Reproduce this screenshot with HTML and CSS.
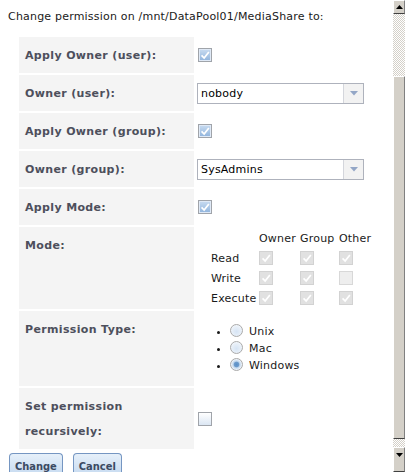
FILE: index.html
```html
<!DOCTYPE html>
<html>
<head>
<meta charset="utf-8">
<link rel="stylesheet" href="styles.css">
</head>
<body>
<div class="page">
  <div class="content">
    <p class="title">Change permission on /mnt/DataPool01/MediaShare to:</p>
    <table class="form">
      <tr>
        <th>Apply Owner (user):</th>
        <td><span class="cb on"><svg viewBox="0 0 14 14"><path d="M3 7.5 L6 10.5 L11.5 3.5"/></svg></span></td>
      </tr>
      <tr>
        <th>Owner (user):</th>
        <td><div class="select"><span class="sel-text">nobody</span><span class="sel-btn"><svg viewBox="0 0 8 5"><path d="M0 0 H8 L4 4.5 Z"/></svg></span></div></td>
      </tr>
      <tr>
        <th>Apply Owner (group):</th>
        <td><span class="cb on"><svg viewBox="0 0 14 14"><path d="M3 7.5 L6 10.5 L11.5 3.5"/></svg></span></td>
      </tr>
      <tr>
        <th>Owner (group):</th>
        <td><div class="select"><span class="sel-text">SysAdmins</span><span class="sel-btn"><svg viewBox="0 0 8 5"><path d="M0 0 H8 L4 4.5 Z"/></svg></span></div></td>
      </tr>
      <tr>
        <th>Apply Mode:</th>
        <td><span class="cb on"><svg viewBox="0 0 14 14"><path d="M3 7.5 L6 10.5 L11.5 3.5"/></svg></span></td>
      </tr>
      <tr>
        <th>Mode:</th>
        <td>
          <div class="mode">
            <span></span><span>Owner</span><span>Group</span><span>Other</span>
            <span>Read</span>
            <span><span class="cb dis"><svg viewBox="0 0 14 14"><path d="M3 7.5 L6 10.5 L11.5 3.5"/></svg></span></span>
            <span><span class="cb dis"><svg viewBox="0 0 14 14"><path d="M3 7.5 L6 10.5 L11.5 3.5"/></svg></span></span>
            <span><span class="cb dis"><svg viewBox="0 0 14 14"><path d="M3 7.5 L6 10.5 L11.5 3.5"/></svg></span></span>
            <span>Write</span>
            <span><span class="cb dis"><svg viewBox="0 0 14 14"><path d="M3 7.5 L6 10.5 L11.5 3.5"/></svg></span></span>
            <span><span class="cb dis"><svg viewBox="0 0 14 14"><path d="M3 7.5 L6 10.5 L11.5 3.5"/></svg></span></span>
            <span><span class="cb dis off"></span></span>
            <span>Execute</span>
            <span><span class="cb dis"><svg viewBox="0 0 14 14"><path d="M3 7.5 L6 10.5 L11.5 3.5"/></svg></span></span>
            <span><span class="cb dis"><svg viewBox="0 0 14 14"><path d="M3 7.5 L6 10.5 L11.5 3.5"/></svg></span></span>
            <span><span class="cb dis"><svg viewBox="0 0 14 14"><path d="M3 7.5 L6 10.5 L11.5 3.5"/></svg></span></span>
          </div>
        </td>
      </tr>
      <tr>
        <th>Permission Type:</th>
        <td>
          <ul class="radios">
            <li><span class="radio"></span><span class="rlabel">Unix</span></li>
            <li><span class="radio"></span><span class="rlabel">Mac</span></li>
            <li><span class="radio sel"></span><span class="rlabel">Windows</span></li>
          </ul>
        </td>
      </tr>
      <tr>
        <th>Set permission recursively:</th>
        <td><span class="cb off"></span></td>
      </tr>
    </table>
    <div class="buttons">
      <button class="btn">Change</button>
      <button class="btn">Cancel</button>
    </div>
  </div>
  <div class="scrollbar">
    <div class="sb-btn"><svg viewBox="0 0 7 4"><path d="M0 4 H7 L3.5 0 Z"/></svg></div>
    <div class="sb-track top"></div>
    <div class="sb-thumb"></div>
    <div class="sb-track bottom"></div>
    <div class="sb-btn"><svg viewBox="0 0 7 4"><path d="M0 0 H7 L3.5 4 Z"/></svg></div>
  </div>
</div>
</body>
</html>
```
FILE: styles.css
```css
html, body {
  margin: 0;
  padding: 0;
  background: #fff;
}
body {
  font-family: "DejaVu Sans", Verdana, sans-serif;
  font-size: 11px;
  letter-spacing: 0.2px;
  color: #1a1a1a;
  overflow: hidden;
  height: 472px;
}
.page {
  display: flex;
  height: 472px;
  width: 405px;
}
.content {
  flex: 1;
  overflow: hidden;
}
.title {
  margin: 0;
  padding: 10px 0 0 8px;
  line-height: 13px;
}
.form {
  border-spacing: 2px;
  margin: 12px 0 0 17px;
}
.form th {
  width: 169px;
  text-align: left;
  vertical-align: top;
  background: #f4f4f4;
  color: #4d4f5c;
  font-weight: bold;
  letter-spacing: 0.35px;
  padding: 6px 0 5px 6px;
  line-height: 25px;
}
.form td {
  vertical-align: middle;
  padding: 0 0 0 1px;
  width: 190px;
}
.cb {
  display: inline-block;
  box-sizing: border-box;
  width: 14px;
  height: 14px;
  border: 1px solid #a0a4aa;
  background: linear-gradient(#c9dcf1, #8fb3dc);
  box-shadow: inset 0 0 0 1px #dfe9f6;
  margin-left: 1px;
  vertical-align: middle;
}
.cb svg {
  display: block;
  width: 12px;
  height: 12px;
}
.cb svg path {
  fill: none;
  stroke: #fff;
  stroke-width: 2;
}
.cb.off {
  background: linear-gradient(#ffffff, #dbe6f3);
  box-shadow: none;
}
.cb.dis {
  border-color: #d2d2d2;
  background: #e1e1e1;
  box-shadow: none;
  margin-left: 0;
}
.cb.dis.off {
  background: #eeeeee;
  border-color: #d8d8d8;
}
.select {
  display: flex;
  box-sizing: border-box;
  width: 167px;
  height: 21px;
  border: 1px solid #aeb2bc;
  background: #fff;
}
.sel-text {
  flex: 1;
  padding-left: 3px;
  line-height: 19px;
  color: #000;
}
.sel-btn {
  width: 19px;
  border-left: 1px solid #d4d6dc;
  background: #f2f2f2;
  display: flex;
  align-items: center;
  justify-content: center;
}
.sel-btn svg {
  width: 8px;
  height: 5px;
}
.sel-btn svg path {
  fill: #93a6c6;
}
.mode {
  display: grid;
  grid-template-columns: 48px 41px 39px 34px;
  grid-auto-rows: 20px;
  margin: 1px 0 1px 14px;
  align-items: center;
  color: #1a1a1a;
}
.mode > span {
  display: flex;
  align-items: center;
}
.radios {
  margin: 12px 0;
  padding-left: 33px;
  list-style: disc;
}
.radios li {
  height: 17px;
  display: list-item;
  line-height: 17px;
}
.radio {
  display: inline-block;
  box-sizing: border-box;
  width: 13px;
  height: 13px;
  border: 1px solid #aaaaaa;
  border-radius: 50%;
  background: radial-gradient(circle at 50% 60%, #d6e4f4 0, #eaf1f9 60%, #fff 100%);
  vertical-align: -2px;
}
.radio.sel {
  background: radial-gradient(circle, #5a8fc6 0, #6d9ccd 2.4px, #bcd3ea 3.2px, #e8f0f9 5px);
}
.rlabel {
  margin-left: 6px;
}
.buttons {
  display: flex;
  gap: 10px;
  margin: 2px 0 0 9px;
}
.btn {
  font-family: "DejaVu Sans Condensed", "DejaVu Sans", sans-serif;
  font-size: 11px;
  font-weight: bold;
  letter-spacing: 0;
  color: #3b4a62;
  height: 24px;
  padding: 2px 5px 0;
  border: 1px solid #7596c2;
  border-bottom: none;
  border-radius: 4px 4px 0 0;
  background: linear-gradient(#e6f0fa, #c3d8ef);
}
.scrollbar {
  width: 12px;
  display: flex;
  flex-direction: column;
  background: #d4d0c8;
}
.sb-btn {
  box-sizing: border-box;
  height: 14px;
  flex: none;
  background: #d4d0c8;
  border-top: 1px solid #fff;
  border-left: 1px solid #fff;
  border-right: 1px solid #808080;
  border-bottom: 1px solid #404040;
  display: flex;
  align-items: center;
  justify-content: center;
}
.sb-btn svg {
  width: 7px;
  height: 4px;
}
.sb-btn svg path {
  fill: #000;
}
.sb-track {
  background: repeating-conic-gradient(#d4d0c8 0 25%, #fff 0 50%) 0 0 / 2px 2px;
}
.sb-track.top {
  height: 62px;
}
.sb-track.bottom {
  height: 8px;
}
.sb-thumb {
  flex: 1;
  box-sizing: border-box;
  background: #d4d0c8;
  border-top: 1px solid #fff;
  border-left: 1px solid #fff;
  border-right: 1px solid #808080;
  border-bottom: 1px solid #404040;
}
.scrollbar .sb-btn:last-child {
  height: 25px;
  align-items: flex-start;
  padding-top: 5px;
}
```
